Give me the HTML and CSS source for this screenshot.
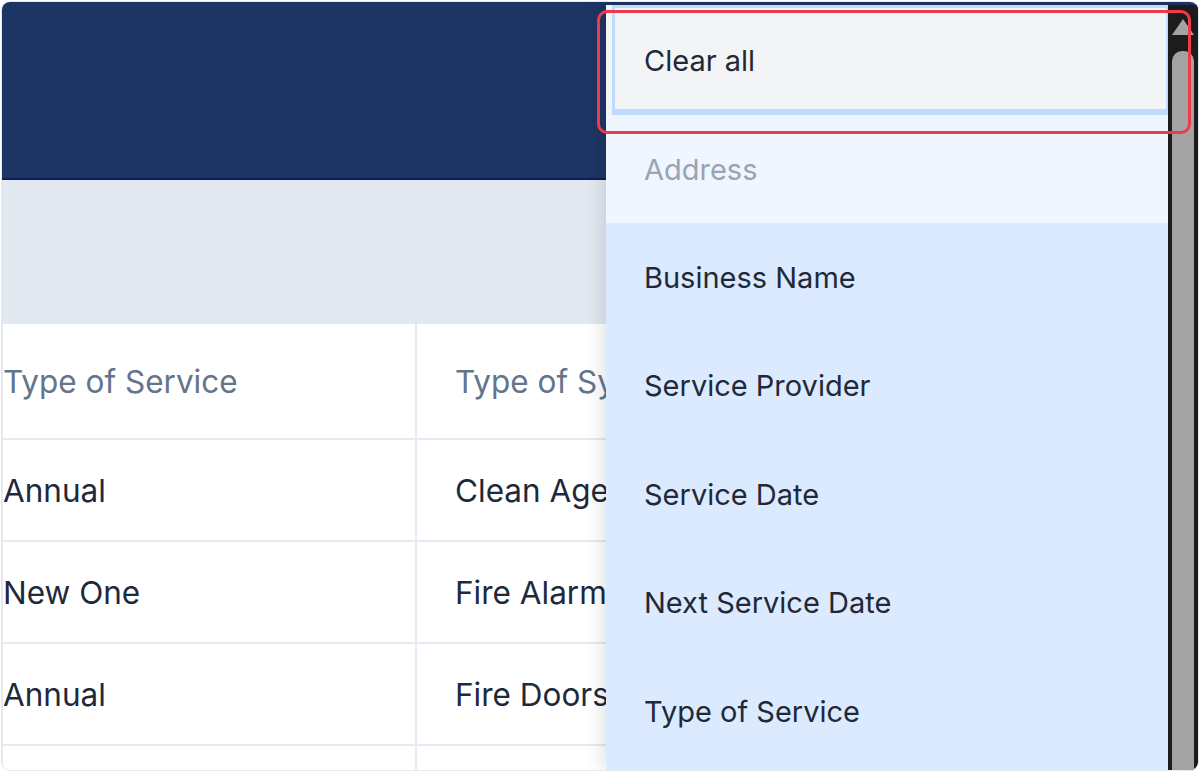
FILE: index.html
```html
<!DOCTYPE html>
<html lang="en">
<head>
<meta charset="utf-8">
<title>Service records</title>
<link rel="stylesheet" href="styles.css">
</head>
<body>
<div class="frame">
  <header class="topbar"></header>
  <div class="filterband"></div>
  <div class="table">
    <div class="row head">
      <div class="cell c1">Type of Service</div>
      <div class="cell c2">Type of System</div>
    </div>
    <div class="row">
      <div class="cell c1">Annual</div>
      <div class="cell c2">Clean Agent</div>
    </div>
    <div class="row">
      <div class="cell c1">New One</div>
      <div class="cell c2">Fire Alarm</div>
    </div>
    <div class="row">
      <div class="cell c1">Annual</div>
      <div class="cell c2">Fire Doors</div>
    </div>
    <div class="row">
      <div class="cell c1"></div>
      <div class="cell c2"></div>
    </div>
  </div>

  <div class="dropdown">
    <ul class="options">
      <li class="option focused">Clear all</li>
      <li class="option disabled">Address</li>
      <li class="option selected">Business Name</li>
      <li class="option selected">Service Provider</li>
      <li class="option selected">Service Date</li>
      <li class="option selected">Next Service Date</li>
      <li class="option selected">Type of Service</li>
    </ul>
    <div class="scrollbar">
      <span class="arrow"></span>
      <span class="thumb"></span>
    </div>
  </div>

  <div class="highlight"></div>
</div>
</body>
</html>
```

FILE: styles.css
```css
* { box-sizing: border-box; }

html, body {
  margin: 0;
  padding: 0;
  background: #ffffff;
  font-family: Inter, "Noto Sans", sans-serif;
}

.frame {
  position: relative;
  margin: 2px;
  width: 1196px;
  height: 768px;
  border-radius: 8px;
  overflow: hidden;
  background: #ffffff;
  box-shadow: 0 0 0 1px #e6e8f0;
}

.topbar {
  height: 178px;
  background: #1d3564;
  border-bottom: 2px solid #0c1c5c;
}

.filterband {
  height: 144px;
  background: #e2e8f0;
}

.table {
  display: flex;
  flex-direction: column;
  border-left: 1px solid #e6e8f0;
  width: 604px;
}

.row {
  display: flex;
  height: 102px;
  border-bottom: 2px solid #e5e9f2;
}

.row.head {
  height: 116px;
}

.cell {
  display: flex;
  align-items: center;
  font-size: 31.5px;
  color: #1e293b;
  white-space: nowrap;
  overflow: hidden;
}

.head .cell {
  color: #64748b;
}

.c1 {
  width: 414px;
  padding-left: 0;
  border-right: 2px solid #e5e9f2;
}

.c2 {
  flex: 1;
  min-width: 0;
  padding-left: 38px;
}

.dropdown {
  position: absolute;
  left: 604px;
  top: 3px;
  right: 0;
  bottom: 0;
  display: flex;
  box-shadow: -6px 0 14px rgba(15, 23, 42, 0.10);
}

.options {
  list-style: none;
  margin: 0;
  padding: 0;
  flex: 1;
  background: #dbeafe;
}

.option {
  height: 108.4px;
  display: flex;
  align-items: center;
  padding-left: 38px;
  font-size: 29px;
  color: #1f2937;
  white-space: nowrap;
}

.option.focused {
  position: relative;
  background: #f3f4f6;
  height: 110px;
}

.option.focused::after {
  content: "";
  position: absolute;
  left: 6px;
  top: 0;
  right: 0;
  bottom: 0;
  border: 3px solid #bfdbfe;
  border-bottom-width: 6px;
  border-right-width: 2px;
}

.option.disabled {
  background: #eff6ff;
  color: #9ca3af;
}

.option.selected {
  background: #dbeafe;
}

.scrollbar {
  position: relative;
  width: 30px;
  background: #1c1c1c;
  display: flex;
  flex-direction: column;
  align-items: center;
}

.arrow {
  margin-top: 14px;
  width: 22px;
  height: 16px;
  background: #a3a3a3;
  clip-path: polygon(50% 0, 100% 100%, 0 100%);
}

.thumb {
  margin-top: 16px;
  width: 22px;
  flex: 1;
  background: #a3a3a3;
  border-radius: 10px 10px 0 0;
}

.highlight {
  position: absolute;
  left: 595px;
  top: 8px;
  width: 594px;
  height: 124px;
  border: 3px solid #f03a4b;
  border-radius: 10px;
  pointer-events: none;
}
```
